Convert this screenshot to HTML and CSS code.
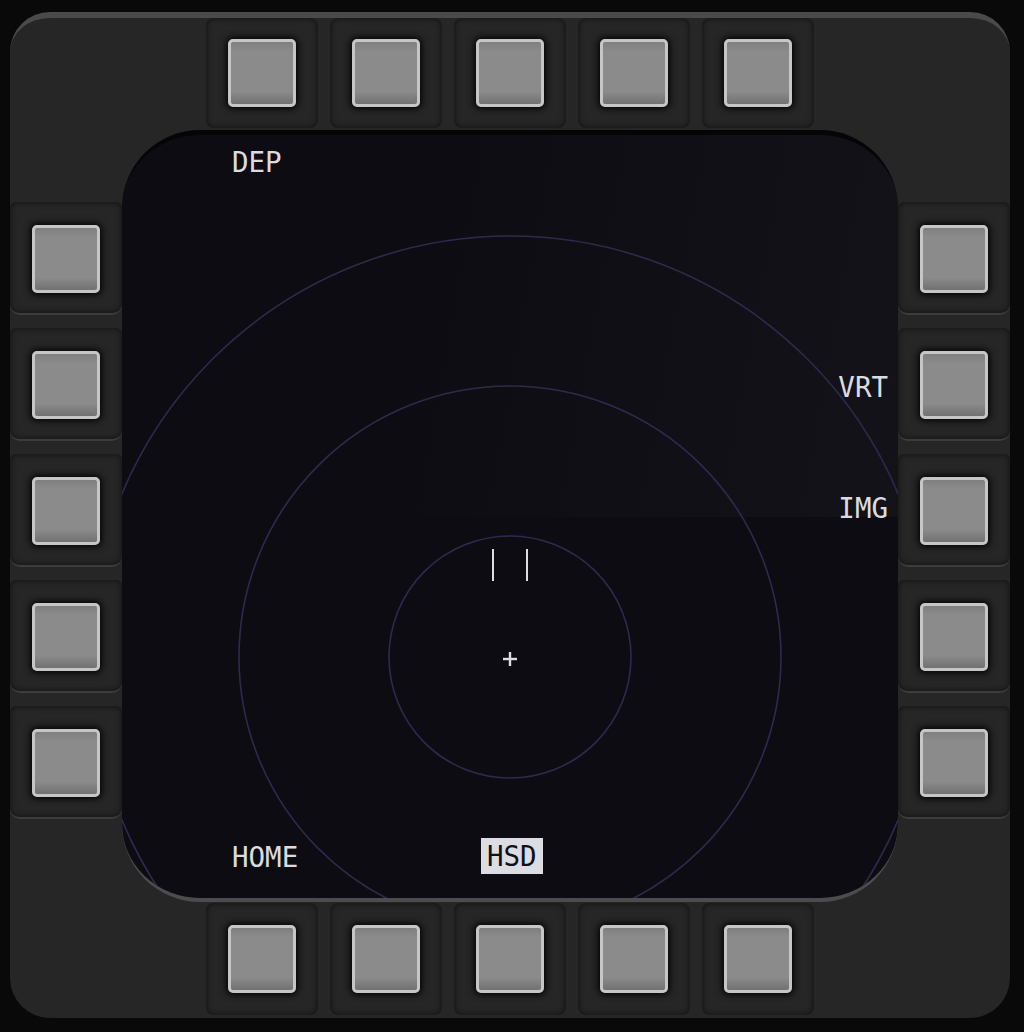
FILE: index.html
```html
<!DOCTYPE html>
<html>
<head>
<meta charset="utf-8">
<link rel="stylesheet" href="styles.css">
</head>
<body>
<div class="bezel">
  <div class="osb-row top">
    <div class="housing"><div class="btn"></div></div>
    <div class="housing"><div class="btn"></div></div>
    <div class="housing"><div class="btn"></div></div>
    <div class="housing"><div class="btn"></div></div>
    <div class="housing"><div class="btn"></div></div>
  </div>
  <div class="osb-col left">
    <div class="housing side"><div class="btn"></div></div>
    <div class="housing side"><div class="btn"></div></div>
    <div class="housing side"><div class="btn"></div></div>
    <div class="housing side"><div class="btn"></div></div>
    <div class="housing side"><div class="btn"></div></div>
  </div>
  <div class="screen">
    <div class="glare"></div>
    <svg class="hsd" width="776" height="763" viewBox="0 0 776 763">
      <circle cx="388" cy="522" r="121" />
      <circle cx="388" cy="522" r="271" />
      <circle cx="388" cy="522" r="421" />
      <line class="tick" x1="371" y1="414" x2="371" y2="446" />
      <line class="tick" x1="405" y1="414" x2="405" y2="446" />
      <line class="tick plus" x1="381" y1="524" x2="395" y2="524" />
      <line class="tick plus" x1="388" y1="517" x2="388" y2="531" />
    </svg>
    <span class="label dep">DEP</span>
    <span class="label vrt">VRT</span>
    <span class="label img">IMG</span>
    <span class="label home">HOME</span>
    <span class="label hsdlbl">HSD</span>
  </div>
  <div class="osb-col right">
    <div class="housing side"><div class="btn"></div></div>
    <div class="housing side"><div class="btn"></div></div>
    <div class="housing side"><div class="btn"></div></div>
    <div class="housing side"><div class="btn"></div></div>
    <div class="housing side"><div class="btn"></div></div>
  </div>
  <div class="osb-row bottom">
    <div class="housing"><div class="btn"></div></div>
    <div class="housing"><div class="btn"></div></div>
    <div class="housing"><div class="btn"></div></div>
    <div class="housing"><div class="btn"></div></div>
    <div class="housing"><div class="btn"></div></div>
  </div>
</div>
</body>
</html>
```

FILE: styles.css
```css
html, body {
  margin: 0;
  padding: 0;
  background: #090909;
}
body {
  width: 1024px;
  height: 1032px;
  overflow: hidden;
}
.bezel {
  box-sizing: border-box;
  width: 1000px;
  height: 1006px;
  margin: 12px 0 0 10px;
  background: #262626;
  border-top: 6px solid #4a4a4a;
  border-radius: 40px;
  display: grid;
  grid-template-columns: 112px 776px 112px;
  grid-template-rows: 112px 772px 114px;
}
.osb-row {
  grid-column: 2;
  display: flex;
  justify-content: center;
  gap: 12px;
  align-items: flex-start;
}
.osb-row.top { grid-row: 1; }
.osb-row.bottom { grid-row: 3; padding-top: 1px; }
.osb-row .housing {
  width: 112px;
  height: 110px;
}
.osb-row.bottom .housing { height: 112px; }
.osb-col {
  grid-row: 2;
  display: flex;
  flex-direction: column;
  gap: 13px;
  padding-top: 72px;
}
.osb-col.left { grid-column: 1; }
.osb-col.right { grid-column: 3; }
.housing {
  box-sizing: border-box;
  display: flex;
  align-items: center;
  justify-content: center;
  background: #262626;
  border-radius: 8px;
  box-shadow: inset 0 0 6px rgba(0, 0, 0, 0.6);
}
.housing.side {
  width: 112px;
  height: 113px;
  border-bottom: 2px solid #3c3c3c;
  border-radius: 6px 6px 10px 10px;
  padding-top: 2px;
}
.btn {
  box-sizing: border-box;
  width: 68px;
  height: 68px;
  border: 3px solid #c6c6c6;
  border-radius: 5px;
  background: linear-gradient(to bottom, #7f7f7f 0, #8b8b8b 14%, #8b8b8b 80%, #717171 100%);
  box-shadow: 0 0 6px 2px rgba(0, 0, 0, 0.9);
}
.screen {
  grid-column: 2;
  grid-row: 2;
  position: relative;
  box-sizing: border-box;
  width: 776px;
  height: 772px;
  background: #0d0c12;
  border-style: solid;
  border-width: 5px 0 4px 0;
  border-color: #050506 transparent #4c4c4c transparent;
  border-radius: 78px;
  overflow: hidden;
}
.glare {
  position: absolute;
  left: 0;
  top: 0;
  width: 776px;
  height: 382px;
  background: linear-gradient(100deg, rgba(255, 255, 255, 0) 35%, rgba(255, 255, 255, 0.028) 100%);
}
.hsd {
  position: absolute;
  left: 0;
  top: 0;
  display: block;
}
.hsd circle {
  fill: none;
  stroke: #2d2b4c;
  stroke-width: 1.6;
}
.hsd .tick {
  stroke: #dedee2;
  stroke-width: 2;
}
.hsd .plus {
  stroke-width: 2.4;
}
.label {
  position: absolute;
  font-family: "DejaVu Sans Mono", monospace;
  font-size: 27.5px;
  line-height: 27px;
  color: #dcdce0;
  white-space: nowrap;
}
.dep { left: 110px; top: 14px; }
.home { left: 110px; top: 709px; }
.vrt { right: 10px; top: 239px; }
.img { right: 10px; top: 360px; }
.hsdlbl {
  left: 359px;
  top: 703px;
  height: 36px;
  line-height: 36px;
  padding: 0 6px;
  background: #dcdde2;
  color: #101016;
}
```
